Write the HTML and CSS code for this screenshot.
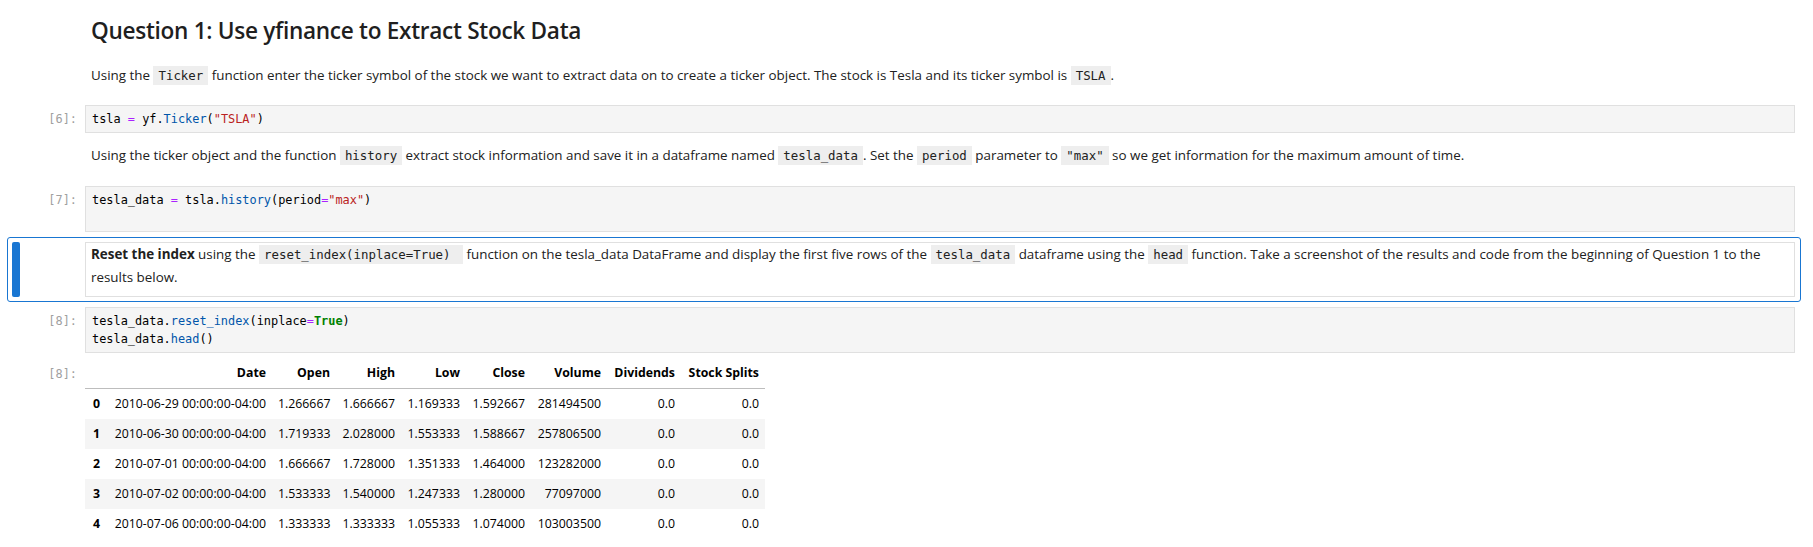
FILE: index.html
```html
<!DOCTYPE html>
<html lang="en">
<head>
<meta charset="utf-8">
<title>Question 1: Use yfinance to Extract Stock Data</title>
<link rel="stylesheet" href="styles.css">
</head>
<body>
<div class="notebook">
  <div class="cell">
    <div class="row">
      <div class="collapser"></div>
      <div class="prompt"></div>
      <div class="md"><h2>Question 1: Use yfinance to Extract Stock Data</h2></div>
    </div>
  </div>
  <div class="cell">
    <div class="row">
      <div class="collapser"></div>
      <div class="prompt"></div>
      <div class="md"><p>Using the <code>Ticker</code> function enter the ticker symbol of the stock we want to extract data on to create a ticker object. The stock is Tesla and its ticker symbol is <code>TSLA</code>.</p></div>
    </div>
  </div>
  <div class="cell">
    <div class="row">
      <div class="collapser"></div>
      <div class="prompt in-prompt">[6]:</div>
      <div class="editor">
        <div class="line">tsla <span class="o">=</span> yf.<span class="p">Ticker</span>(<span class="s">"TSLA"</span>)</div>
      </div>
    </div>
  </div>
  <div class="cell">
    <div class="row">
      <div class="collapser"></div>
      <div class="prompt"></div>
      <div class="md"><p>Using the ticker object and the function <code>history</code> extract stock information and save it in a dataframe named <code>tesla_data</code>. Set the <code>period</code> parameter to <code>"max"</code> so we get information for the maximum amount of time.</p></div>
    </div>
  </div>
  <div class="cell">
    <div class="row">
      <div class="collapser"></div>
      <div class="prompt in-prompt">[7]:</div>
      <div class="editor">
        <div class="line">tesla_data <span class="o">=</span> tsla.<span class="p">history</span>(period<span class="o">=</span><span class="s">"max"</span>)</div>
        <div class="line"></div>
      </div>
    </div>
  </div>
  <div class="cell active">
    <div class="row">
      <div class="collapser"></div>
      <div class="prompt"></div>
      <div class="md"><p><strong>Reset the index</strong> using the <code>reset_index(inplace=True) </code> function on the tesla_data DataFrame and display the first five rows of the <code>tesla_data</code> dataframe using the <code>head</code> function. Take a screenshot of the results and code from the beginning of Question 1 to the results below.</p></div>
    </div>
  </div>
  <div class="cell">
    <div class="row">
      <div class="collapser"></div>
      <div class="prompt in-prompt">[8]:</div>
      <div class="editor">
        <div class="line">tesla_data.<span class="p">reset_index</span>(inplace<span class="o">=</span><span class="k">True</span>)</div>
        <div class="line">tesla_data.<span class="p">head</span>()</div>
      </div>
    </div>
    <div class="row output">
      <div class="collapser"></div>
      <div class="prompt out-prompt">[8]:</div>
      <div class="out-body">
        <table class="df">
          <colgroup>
            <col class="c-idx"><col class="c-date"><col class="c-64"><col class="c-65"><col class="c-65"><col class="c-65"><col class="c-vol"><col class="c-div"><col class="c-split">
          </colgroup>
          <thead>
            <tr><th></th><th>Date</th><th>Open</th><th>High</th><th>Low</th><th>Close</th><th>Volume</th><th>Dividends</th><th>Stock Splits</th></tr>
          </thead>
          <tbody>
            <tr><th>0</th><td>2010-06-29 00:00:00-04:00</td><td>1.266667</td><td>1.666667</td><td>1.169333</td><td>1.592667</td><td>281494500</td><td>0.0</td><td>0.0</td></tr>
            <tr><th>1</th><td>2010-06-30 00:00:00-04:00</td><td>1.719333</td><td>2.028000</td><td>1.553333</td><td>1.588667</td><td>257806500</td><td>0.0</td><td>0.0</td></tr>
            <tr><th>2</th><td>2010-07-01 00:00:00-04:00</td><td>1.666667</td><td>1.728000</td><td>1.351333</td><td>1.464000</td><td>123282000</td><td>0.0</td><td>0.0</td></tr>
            <tr><th>3</th><td>2010-07-02 00:00:00-04:00</td><td>1.533333</td><td>1.540000</td><td>1.247333</td><td>1.280000</td><td>77097000</td><td>0.0</td><td>0.0</td></tr>
            <tr><th>4</th><td>2010-07-06 00:00:00-04:00</td><td>1.333333</td><td>1.333333</td><td>1.055333</td><td>1.074000</td><td>103003500</td><td>0.0</td><td>0.0</td></tr>
          </tbody>
        </table>
      </div>
    </div>
  </div>
</div>
</body>
</html>
```

FILE: styles.css
```css
html, body {
  margin: 0;
  padding: 0;
  background: #ffffff;
}
html {
  overflow: hidden;
}
body {
  font-family: "Open Sans", "Noto Sans", sans-serif;
  font-size: 13.4px;
  color: #212121;
}

.cell {
  margin: 0 12px 0 7px;
  border: 1px solid transparent;
  border-radius: 3px;
  padding: 4px 5px 4px 4px;
}
.cell.active {
  border-color: #1976d2;
}
.row {
  display: flex;
}
.collapser {
  width: 8px;
  flex: none;
  border-radius: 2px;
}
.active .collapser {
  background: #1976d2;
}
.prompt {
  width: 65px;
  flex: none;
  box-sizing: border-box;
  padding-right: 8px;
  text-align: right;
  font-family: "DejaVu Sans Mono", "Liberation Mono", monospace;
  font-size: 11.9px;
  color: #a0a0a0;
}
.in-prompt {
  padding-top: 5px;
  line-height: 18px;
}
.out-prompt {
  line-height: 30px;
}

.editor {
  flex: 1;
  min-width: 0;
  background: #f5f5f5;
  border: 1px solid #e0e0e0;
  padding: 4px 6px;
  font-family: "DejaVu Sans Mono", "Liberation Mono", monospace;
  font-size: 11.9px;
  line-height: 18px;
  color: #000000;
}
.editor .line {
  min-height: 18px;
  white-space: pre;
}
.editor .o { color: #aa22ff; }
.editor .p { color: #0055aa; }
.editor .s { color: #ba2121; }
.editor .k { color: #008000; font-weight: bold; }

.md {
  flex: 1;
  min-width: 0;
  border: 1px solid transparent;
  padding: 0 0 7px 5px;
  line-height: 22.4px;
}
.active .md {
  border-color: #e0e0e0;
}
.md p {
  margin: 0;
}
.md h2 {
  margin: 11px 0 0;
  font-size: 22.6px;
  letter-spacing: -0.3px;
  line-height: 28px;
  font-weight: 600;
  color: #1f1f1f;
}
.md code {
  font-family: "DejaVu Sans Mono", "Liberation Mono", monospace;
  font-size: 12.4px;
  background: #eeeeee;
  padding: 2px 5px;
  white-space: pre;
  color: #212121;
}

.output {
  margin-top: 6px;
}
.out-body {
  flex: 1;
  min-width: 0;
}
.df {
  border-collapse: collapse;
  table-layout: fixed;
  width: 680px;
  font-size: 12.3px;
  line-height: 18px;
  color: #000000;
}
.df th, .df td {
  padding: 6px;
  text-align: right;
  white-space: nowrap;
  vertical-align: middle;
}
.df th {
  font-weight: bold;
}
.df thead th {
  border-bottom: 1px solid #bdbdbd;
  padding-top: 5px;
}
.df tbody tr:nth-child(even) {
  background: #f5f5f5;
}
.df .c-idx { width: 21px; }
.df .c-date { width: 166px; }
.df .c-64 { width: 64px; }
.df .c-65 { width: 65px; }
.df .c-vol { width: 76px; }
.df .c-div { width: 74px; }
.df .c-split { width: 84px; }
```
